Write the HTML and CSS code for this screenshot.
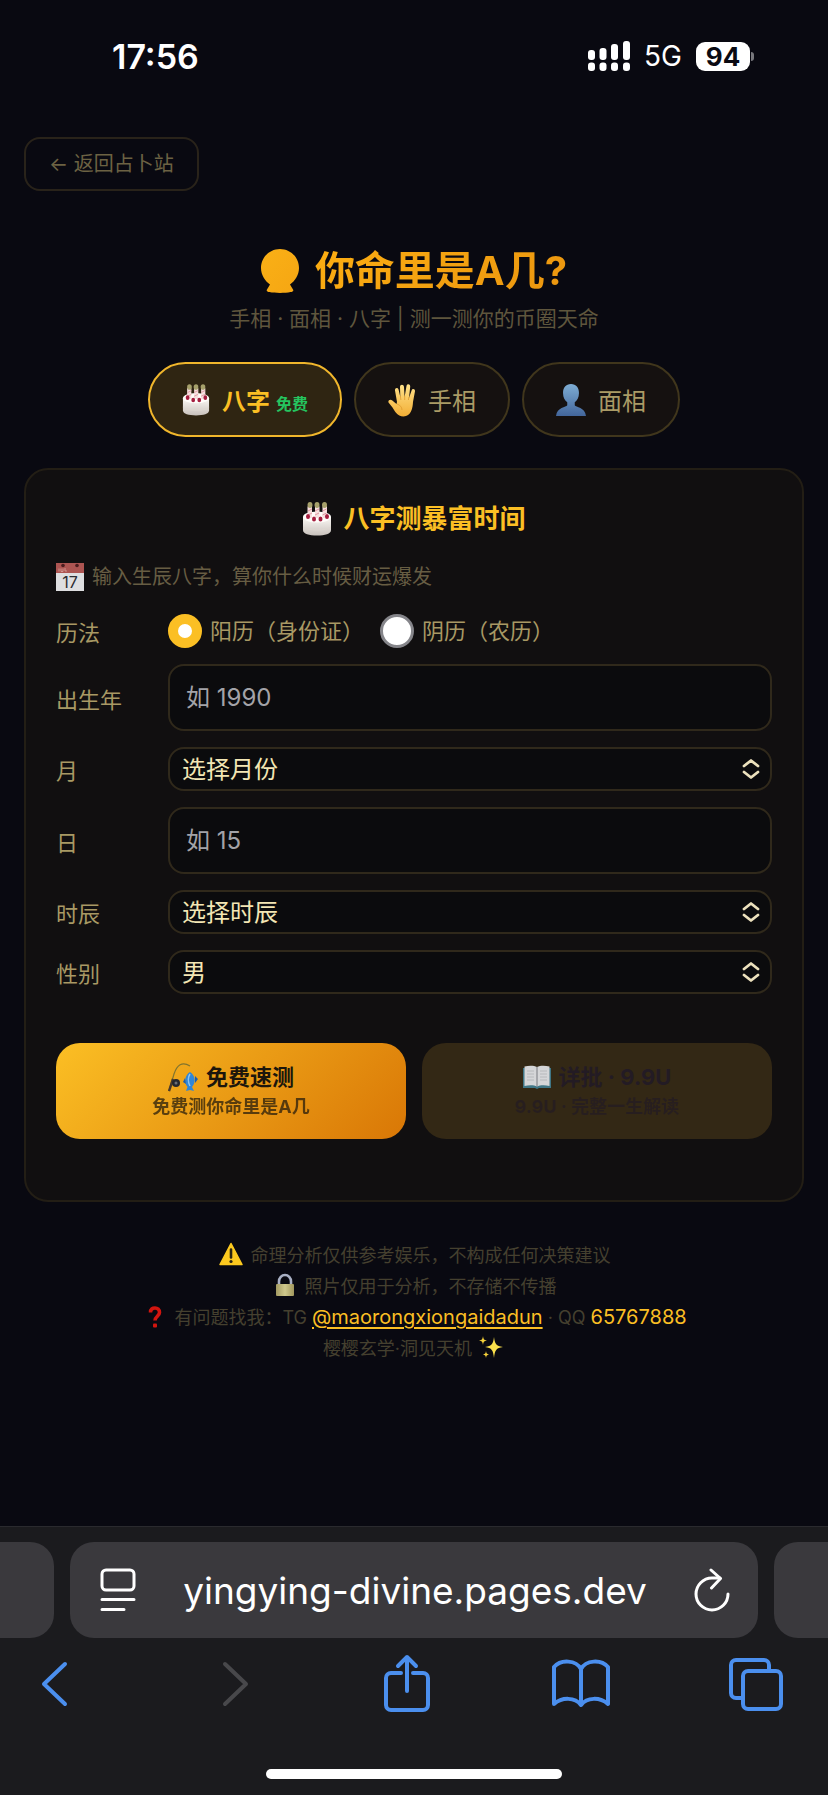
FILE: index.html
```html
<!DOCTYPE html>
<html lang="zh-CN">
<head>
    <meta charset="UTF-8">
    <meta name="viewport" content="width=device-width, initial-scale=1.0">
    <title>你命里是A几?</title>
    <link rel="stylesheet" href="styles.css">
</head>
<body>

    <!-- Shared icons -->
    <svg class="defs" width="0" height="0" aria-hidden="true">
        <defs>
            <linearGradient id="cake-side" x1="0" y1="0" x2="0" y2="1">
                <stop offset="0" stop-color="#fbf8f4"/>
                <stop offset="1" stop-color="#c9c2bd"/>
            </linearGradient>
            <linearGradient id="skin" x1="0" y1="0" x2="0" y2="1">
                <stop offset="0" stop-color="#ffe28a"/>
                <stop offset="1" stop-color="#f2ae35"/>
            </linearGradient>
            <linearGradient id="bust" x1="0" y1="0" x2="0" y2="1">
                <stop offset="0" stop-color="#7eadd4"/>
                <stop offset="1" stop-color="#43669b"/>
            </linearGradient>
            <linearGradient id="brass" x1="0" y1="0" x2="1" y2="0">
                <stop offset="0" stop-color="#a39a62"/>
                <stop offset="0.5" stop-color="#cfc88c"/>
                <stop offset="1" stop-color="#a0965c"/>
            </linearGradient>
            <linearGradient id="ball" x1="0" y1="0" x2="1" y2="1">
                <stop offset="0" stop-color="#fab016"/>
                <stop offset="1" stop-color="#f5a613"/>
            </linearGradient>
        </defs>
        <symbol id="icon-cake" viewBox="0 0 30 34">
            <path d="M1 15v13c0 4 6 5.500 14 5.500S29 32 29 28V15z" fill="url(#cake-side)"/>
            <ellipse cx="15" cy="15" rx="14" ry="5.500" fill="#fffdfa"/>
            <path d="M1 25c4 4 24 4 28 0" fill="none" stroke="#ded7d1" stroke-width="1"/>
            <g fill="#f6dede">
                <rect x="5.500" y="4" width="4.500" height="12" rx="1"/>
                <rect x="13" y="4" width="4.500" height="12" rx="1"/>
                <rect x="20.500" y="4" width="4.500" height="12" rx="1"/>
            </g>
            <g stroke="#e09aa4" stroke-width="1">
                <path d="M6 9l4-2M6 13l4-2M13 9l4-2M13 13l4-2M20.500 9l4-2M20.500 13l4-2"/>
            </g>
            <g fill="#a6a06a">
                <ellipse cx="8" cy="3" rx="2.500" ry="3"/>
                <ellipse cx="15" cy="3" rx="2.500" ry="3"/>
                <ellipse cx="22.500" cy="3" rx="2.500" ry="3"/>
            </g>
            <g fill="#a51d3f">
                <ellipse cx="6" cy="14.500" rx="2" ry="2.500"/>
                <ellipse cx="12" cy="17" rx="2" ry="2.500"/>
                <ellipse cx="18.500" cy="17" rx="2" ry="2.500"/>
                <ellipse cx="25" cy="14.500" rx="2" ry="2.500"/>
            </g>
        </symbol>
        <symbol id="icon-updown" viewBox="0 0 18 20">
            <path d="M2 7l7-5.500L16 7M2 13l7 5.500L16 13" fill="none" stroke="#ece1bd" stroke-width="2.800" stroke-linecap="round" stroke-linejoin="round"/>
        </symbol>
    </svg>

    <!-- Status bar -->
    <header class="status-bar">
        <span class="time">17:56</span>
        <div class="status-icons">
            <svg width="42" height="30" viewBox="0 0 42 30" fill="#fff" aria-hidden="true">
                <rect x="0" y="9" width="7" height="10" rx="3"/>
                <rect x="11.500" y="7" width="7" height="12" rx="3"/>
                <rect x="23" y="3" width="7" height="16" rx="3"/>
                <rect x="35" y="0" width="7" height="19" rx="3"/>
                <rect x="0" y="21.500" width="7" height="8.500" rx="3"/>
                <rect x="11.500" y="21.500" width="7" height="8.500" rx="3"/>
                <rect x="23" y="21.500" width="7" height="8.500" rx="3"/>
                <rect x="35" y="21.500" width="7" height="8.500" rx="3"/>
            </svg>
            <span class="network">5G</span>
            <span class="battery">94</span>
        </div>
    </header>

    <main class="page">
        <a class="back" href="#">← 返回占卜站</a>

        <h1>
            <svg width="38" height="44" viewBox="0 0 38 44" aria-hidden="true">
                <path d="M19 0C8.500 0 0 8.500 0 19c0 7 4 13 9 16.500L6 40.500c-1 1.500.5 2.200 2.500 2.600 5.500 1.200 15.500 1.200 21 0 2-.4 3.500-1.100 2.500-2.600l-3-5C34 32 38 26 38 19 38 8.500 29.500 0 19 0z" fill="url(#ball)"/>
            </svg>
            <span>你命里是A几?</span>
        </h1>
        <p class="subtitle">手相 · 面相 · 八字 | 测一测你的币圈天命</p>

        <!-- Tabs -->
        <div class="tabs">
            <button type="button" class="tab active">
                <svg width="28" height="32" aria-hidden="true"><use href="#icon-cake"/></svg>
                <span>八字 <small>免费</small></span>
            </button>
            <button type="button" class="tab">
                <svg width="28" height="34" viewBox="0 0 28 34" aria-hidden="true">
                    <path d="M9 19L7 7.500c-.4-3 3-3.500 3.600-.8L12.300 14 12 4c0-3 3.800-3 4 0l.6 10L18.500 3c.5-2.700 4-2 3.700.7L21 15l2.600-7.500c.9-2.500 4-1.500 3.300 1.200L25 19c-.2 6-2 14.500-9.500 14.500C9 33.500 7 28 4.500 24.500L.7 19.800c-1.300-2 1.300-4 3.300-2.500L8.500 21z" fill="url(#skin)"/>
                    <path d="M12.400 13l.5 4M16.700 13v4M20.900 14l-.5 3M9 21c3 1 5 3 5 6" fill="none" stroke="#dd9a2e" stroke-width="0.800"/>
                </svg>
                <span>手相</span>
            </button>
            <button type="button" class="tab">
                <svg width="30" height="34" viewBox="0 0 32 34" aria-hidden="true">
                    <path d="M16 0c-5.500 0-8.500 4-8.500 9.500 0 5 2 8 4.500 10v3c-1 2-11 2-12 11.500h32c-1-9.500-11-9.500-12-11.500v-3c2.500-2 4.500-5 4.500-10C24.500 4 21.500 0 16 0z" fill="url(#bust)"/>
                </svg>
                <span>面相</span>
            </button>
        </div>

        <!-- Birth form -->
        <form class="card">
            <h2>
                <svg width="30" height="34" aria-hidden="true"><use href="#icon-cake"/></svg>
                <span>八字测暴富时间</span>
            </h2>
            <p class="hint">
                <svg width="28" height="28" viewBox="0 0 28 28" aria-hidden="true">
                    <rect width="28" height="28" fill="#dedee0"/>
                    <rect width="28" height="10" fill="#ad5552"/>
                    <circle cx="7" cy="2.500" r="1.800" fill="#4b1d1f"/>
                    <circle cx="21" cy="2.500" r="1.800" fill="#4b1d1f"/>
                    <path d="M3 5.500v3M5 5.500v3h2v-3M9 5v3h2" fill="none" stroke="#d9a3a0" stroke-width="0.800"/>
                    <text x="14" y="25" text-anchor="middle" class="calendar-day">17</text>
                </svg>
                <span>输入生辰八字，算你什么时候财运爆发</span>
            </p>

            <div class="fields">
                <div class="row" role="radiogroup" aria-labelledby="calendar-label">
                    <span class="label" id="calendar-label">历法</span>
                    <div class="radios">
                        <label><input type="radio" name="calendar" value="solar" checked>阳历（身份证）</label>
                        <label><input type="radio" name="calendar" value="lunar">阴历（农历）</label>
                    </div>
                </div>
                <div class="row">
                    <label class="label" for="year">出生年</label>
                    <input class="text-input" id="year" type="text" inputmode="numeric" placeholder="如 1990">
                </div>
                <div class="row">
                    <label class="label" for="month">月</label>
                    <div class="select">
                        <select id="month">
                            <option>选择月份</option>
                            <option>1</option>
                            <option>2</option>
                            <option>3</option>
                            <option>4</option>
                            <option>5</option>
                            <option>6</option>
                            <option>7</option>
                            <option>8</option>
                            <option>9</option>
                            <option>10</option>
                            <option>11</option>
                            <option>12</option>
                        </select>
                        <svg width="18" height="20" aria-hidden="true"><use href="#icon-updown"/></svg>
                    </div>
                </div>
                <div class="row">
                    <label class="label" for="day">日</label>
                    <input class="text-input" id="day" type="text" inputmode="numeric" placeholder="如 15">
                </div>
                <div class="row">
                    <label class="label" for="hour">时辰</label>
                    <div class="select">
                        <select id="hour">
                            <option>选择时辰</option>
                        </select>
                        <svg width="18" height="20" aria-hidden="true"><use href="#icon-updown"/></svg>
                    </div>
                </div>
                <div class="row">
                    <label class="label" for="gender">性别</label>
                    <div class="select">
                        <select id="gender">
                            <option>男</option>
                            <option>女</option>
                        </select>
                        <svg width="18" height="20" aria-hidden="true"><use href="#icon-updown"/></svg>
                    </div>
                </div>
            </div>

            <div class="actions">
                <button type="button" class="action free">
                    <span class="action-title">
                        <svg width="30" height="30" viewBox="0 0 30 30" aria-hidden="true">
                            <path d="M1 29L6 12C9 3 14-1 22 4" fill="none" stroke="#80742f" stroke-width="1.200"/>
                            <path d="M1 29l4-12" stroke="#4a3a2b" stroke-width="2.400"/>
                            <circle cx="8" cy="21" r="4" fill="#26282f"/>
                            <circle cx="8" cy="21" r="1.500" fill="#6d6f75"/>
                            <path d="M22 10c5 3 6.500 10 2 15l2 4-4-1-4 1 1.500-4c-4-5-2.500-12 2.500-15z" fill="#2f86d8"/>
                            <path d="M27 14l3 3-3 4zM17 16l-2 4 3 2z" fill="#1d5fae"/>
                            <path d="M22 12c-2 3-2 8 0 12" fill="none" stroke="#8cc4f2" stroke-width="1.500"/>
                        </svg>
                        <span>免费速测</span>
                    </span>
                    <span class="action-note">免费测你命里是A几</span>
                </button>
                <button type="button" class="action paid">
                    <span class="action-title">
                        <svg width="28" height="24" viewBox="0 0 28 24" aria-hidden="true">
                            <path d="M0 3h28v20H16l-2 1-2-1H0z" fill="#3f7686"/>
                            <path d="M1.500 1.500C6 .5 11 .5 14 2v19.500c-3-1.500-8-1.500-12.500-.5zM26.500 1.500C22 .5 17 .5 14 2v19.500c3-1.500 8-1.500 12.500-.5z" fill="#d5d6d8"/>
                            <path d="M14 2v19.500" stroke="#77797e" stroke-width="1"/>
                            <path d="M4 6h7M4 9h7M4 12h7M4 15h7M17 6h7M17 9h7M17 12h7M17 15h7" stroke="#b0b2b6" stroke-width="0.800"/>
                        </svg>
                        <span>详批 · 9.9U</span>
                    </span>
                    <span class="action-note">9.9U · 完整一生解读</span>
                </button>
            </div>
        </form>

        <footer class="footer">
            <p>
                <svg width="24" height="24" viewBox="0 0 24 24" aria-hidden="true">
                    <path d="M12 1.500L23 22.500H1z" fill="#fcc91f" stroke="#fcc91f" stroke-width="1.500" stroke-linejoin="round"/>
                    <path d="M12 7.500v8" stroke="#2a2412" stroke-width="2.600" stroke-linecap="round"/>
                    <circle cx="12" cy="19.500" r="1.600" fill="#2a2412"/>
                </svg>
                命理分析仅供参考娱乐，不构成任何决策建议
            </p>
            <p>
                <svg width="24" height="24" viewBox="0 0 24 24" aria-hidden="true">
                    <path d="M6 12V8.500a6 6.500 0 0 1 12 0V12" fill="none" stroke="#a9b0c4" stroke-width="2.600"/>
                    <rect x="3" y="11" width="18" height="12" rx="1" fill="url(#brass)"/>
                </svg>
                照片仅用于分析，不存储不传播
            </p>
            <p>
                <svg width="24" height="22" viewBox="0 0 24 22" aria-hidden="true">
                    <path d="M7.500 6.500C7.500 3 9.500 2 12 2s4.500 1.500 4.500 4.500c0 3.500-4.500 4-4.500 8" fill="none" stroke="#d2150f" stroke-width="3.600"/>
                    <rect x="10" y="17.500" width="4" height="4" rx="1" fill="#d2150f"/>
                </svg>
                有问题找我：TG <a href="#">@maorongxiongaidadun</a> · QQ <span class="qq">65767888</span>
            </p>
            <p>
                樱樱玄学·洞见天机
                <svg width="24" height="24" viewBox="0 0 24 24" aria-hidden="true">
                    <path d="M15 2c1 7 2 9 9 10-7 1-8 3-9 11-1-8-2-10-9-11 7-1 8-3 9-10z" fill="#fae04c"/>
                    <path d="M4 1c.5 3.500 1 4 4 4.500C5 6 4.500 6.500 4 10c-.5-3.500-1-4-4-4.500C3 5 3.500 4.500 4 1zM7 16c.4 2.500.8 3 3 3.500-2.200.5-2.600 1-3 3.500-.4-2.500-.8-3-3-3.500 2.200-.5 2.600-1 3-3.500z" fill="#f3cf3a"/>
                </svg>
            </p>
        </footer>
    </main>

    <!-- Browser toolbar -->
    <div class="browser">
        <div class="address-row">
            <div class="side-tab left"></div>
            <div class="address">
                <button type="button" aria-label="页面设置">
                    <svg width="36" height="44" viewBox="0 0 36 44" fill="none" stroke="#fff" stroke-width="3" stroke-linecap="round">
                        <rect x="2" y="2" width="32" height="20" rx="4"/>
                        <path d="M2 31.500h32M2 41.500h22"/>
                    </svg>
                </button>
                <span class="url">yingying-divine.pages.dev</span>
                <button type="button" aria-label="重新载入">
                    <svg width="36" height="44" viewBox="0 0 36 44" fill="none" stroke="#fff" stroke-width="3" stroke-linecap="round" stroke-linejoin="round">
                        <path d="M34 26A16 16 0 1 1 18 10h8"/>
                        <path d="M17 2l9.500 8.500L17.500 20"/>
                    </svg>
                </button>
            </div>
            <div class="side-tab right"></div>
        </div>
        <nav class="toolbar">
            <button type="button" aria-label="后退">
                <svg width="60" height="60" viewBox="0 0 60 60"><path d="M40 10L19 30l21 20"/></svg>
            </button>
            <button type="button" aria-label="前进" disabled>
                <svg width="60" height="60" viewBox="0 0 60 60"><path d="M25 10l21 20-21 20"/></svg>
            </button>
            <button type="button" aria-label="分享">
                <svg width="60" height="60" viewBox="0 0 60 60"><path d="M25 19H15a5 5 0 0 0-5 5v27a5 5 0 0 0 5 5h32a5 5 0 0 0 5-5V24a5 5 0 0 0-5-5H37M31 37V3M22 12l9-9 9 9"/></svg>
            </button>
            <button type="button" aria-label="书签">
                <svg width="60" height="60" viewBox="0 0 60 60"><path d="M30 15C25 6 10 5 3 13v37c8-7 21-7 27 1 6-8 19-8 27-1V13C50 5 35 6 30 15zM30 15v36"/></svg>
            </button>
            <button type="button" aria-label="标签页">
                <svg width="60" height="60" viewBox="0 0 60 60"><rect x="17" y="17" width="38" height="38" rx="5"/><path d="M17 44H10a5 5 0 0 1-5-5V11a5 5 0 0 1 5-5h28a5 5 0 0 1 5 5v6"/></svg>
            </button>
        </nav>
        <div class="home-indicator"></div>
    </div>

</body>
</html>
```

FILE: styles.css
```css
/* Basic styles */
* {
    box-sizing: border-box;
}

body {
    font-family: Inter, "Noto Sans CJK SC", sans-serif;
    background-color: #090911;
    color: #fde68a;
    margin: 0;
    min-height: 100vh;
    display: flex;
    flex-direction: column;
}

h1, h2, p {
    margin: 0;
}

button, input, select {
    font-family: inherit;
    margin: 0;
}

button {
    border: none;
    background: none;
    padding: 0;
    cursor: pointer;
}

.defs {
    position: absolute;
}

/* Status bar */
.status-bar {
    display: flex;
    justify-content: space-between;
    align-items: center;
    height: 112px;
    padding: 0 78px 0 112px;
    color: #fff;
}

.time {
    font-size: 34px;
    font-weight: 600;
}

.status-icons {
    display: flex;
    align-items: center;
    gap: 14px;
}

.network {
    font-size: 28px;
}

.battery {
    position: relative;
    width: 54px;
    height: 29px;
    border-radius: 9px;
    background-color: #fff;
    color: #0a0a12;
    font-size: 26px;
    font-weight: 700;
    line-height: 29px;
    text-align: center;
}

.battery::after {
    content: "";
    position: absolute;
    left: 55px;
    top: 10px;
    width: 3px;
    height: 9px;
    border-radius: 0 3px 3px 0;
    background-color: #77777c;
}

/* Page */
.page {
    flex: 1;
    padding: 25px 24px 40px;
}

.back {
    display: inline-block;
    padding: 12px 23px;
    border: 2px solid #29231a;
    border-radius: 16px;
    color: #6c6243;
    font-size: 20px;
    line-height: 26px;
    text-decoration: none;
}

h1 {
    display: flex;
    justify-content: center;
    align-items: center;
    gap: 16px;
    margin-top: 52px;
    font-size: 40px;
    line-height: 56px;
    font-weight: 700;
}

h1 span {
    background: linear-gradient(135deg, #fcae12, #ea950f);
    -webkit-background-clip: text;
    background-clip: text;
    color: transparent;
}

.subtitle {
    margin-top: 6px;
    color: #5f563d;
    font-size: 21px;
    line-height: 28px;
    text-align: center;
}

/* Tabs */
.tabs {
    display: flex;
    justify-content: center;
    gap: 12px;
    margin-top: 29px;
}

.tab {
    display: flex;
    align-items: center;
    gap: 12px;
    height: 75px;
    padding: 0 32px;
    border: 2px solid #40361c;
    border-radius: 38px;
    background-color: #151110;
    color: #aa9b66;
    font-size: 24px;
}

.tab.active {
    border-color: #f0b62c;
    background-color: #2f2512;
    color: #fbbf24;
    font-weight: 600;
}

.tab small {
    color: #25c45f;
    font-size: 16px;
}

/* Card */
.card {
    margin-top: 31px;
    padding: 30px 30px 61px;
    border: 2px solid #231e15;
    border-radius: 24px;
    background-color: #110f10;
}

h2 {
    display: flex;
    justify-content: center;
    align-items: center;
    gap: 11px;
    color: #fbbf24;
    font-size: 26px;
    line-height: 38px;
    font-weight: 700;
}

.hint {
    display: flex;
    align-items: center;
    gap: 8px;
    margin-top: 25px;
    color: #675d43;
    font-size: 20px;
    line-height: 28px;
}

.calendar-day {
    fill: #2c2c30;
    font-size: 16px;
}

.fields {
    display: flex;
    flex-direction: column;
    gap: 16px;
    margin-top: 23px;
}

.row {
    display: grid;
    grid-template-columns: 112px 1fr;
    align-items: center;
}

.label {
    color: #a89964;
    font-size: 22px;
}

.radios {
    display: flex;
    gap: 16px;
}

.radios label {
    display: flex;
    align-items: center;
    gap: 8px;
    color: #a89964;
    font-size: 22px;
    line-height: 34px;
}

.radios input {
    appearance: none;
    width: 34px;
    height: 34px;
    border: 3px solid #85858a;
    border-radius: 50%;
    background-color: #fff;
}

.radios input:checked {
    border: 10px solid #fbbf24;
}

.text-input,
.select select {
    width: 100%;
    border: 2px solid #30291b;
    border-radius: 16px;
    background-color: #0b0b0d;
    color: #f3e6b4;
    font-size: 24px;
}

.text-input {
    height: 67px;
    padding: 0 16px;
}

.text-input::placeholder {
    color: #a3a3a8;
}

.select {
    position: relative;
}

.select select {
    display: block;
    appearance: none;
    height: 44px;
    padding: 0 12px;
}

.select svg {
    position: absolute;
    right: 12px;
    top: 12px;
    pointer-events: none;
}

.actions {
    display: grid;
    grid-template-columns: 1fr 1fr;
    gap: 16px;
    margin-top: 49px;
}

.action {
    display: flex;
    flex-direction: column;
    justify-content: center;
    align-items: center;
    height: 96px;
    border-radius: 24px;
    color: #1c160c;
    font-weight: 700;
}

.action.free {
    background: linear-gradient(135deg, #fbbf24, #d97706);
}

.action.paid {
    background-color: #332815;
    color: #231b24;
}

.action-title {
    display: flex;
    align-items: center;
    gap: 8px;
    font-size: 22px;
    line-height: 32px;
}

.action-note {
    font-size: 18px;
    line-height: 28px;
    opacity: 0.7;
}

/* Footer */
.footer {
    margin-top: 38px;
    color: #45402f;
    font-size: 18px;
    line-height: 31px;
    text-align: center;
}

.footer svg {
    margin: 0 2px;
    vertical-align: -4px;
}

.footer a,
.footer .qq {
    color: #fbbf24;
    font-size: 20px;
    line-height: 24px;
}

.footer a {
    text-underline-offset: 3px;
}

/* Browser toolbar */
.browser {
    border-top: 1px solid #2a2a2e;
    background-color: #1b1b1e;
    padding: 15px 0 16px;
}

.address-row {
    display: flex;
    gap: 16px;
}

.side-tab {
    width: 54px;
    background-color: #3a393d;
}

.side-tab.left {
    border-radius: 0 24px 24px 0;
}

.side-tab.right {
    border-radius: 24px 0 0 24px;
}

.address {
    flex: 1;
    display: flex;
    justify-content: space-between;
    align-items: center;
    height: 96px;
    padding: 0 28px 0 30px;
    border-radius: 24px;
    background-color: #3a393d;
}

.address svg,
.toolbar svg {
    display: block;
}

.url {
    color: #fff;
    font-size: 37px;
}

.toolbar {
    display: flex;
    justify-content: space-between;
    margin-top: 16px;
    padding: 0 42px 0 25px;
}

.toolbar svg {
    fill: none;
    stroke: #4b8fee;
    stroke-width: 4px;
    stroke-linecap: round;
    stroke-linejoin: round;
}

.toolbar button:disabled svg {
    stroke: #48484b;
}

.home-indicator {
    width: 296px;
    height: 10px;
    margin: 55px auto 0;
    border-radius: 5px;
    background-color: #fff;
}
```
